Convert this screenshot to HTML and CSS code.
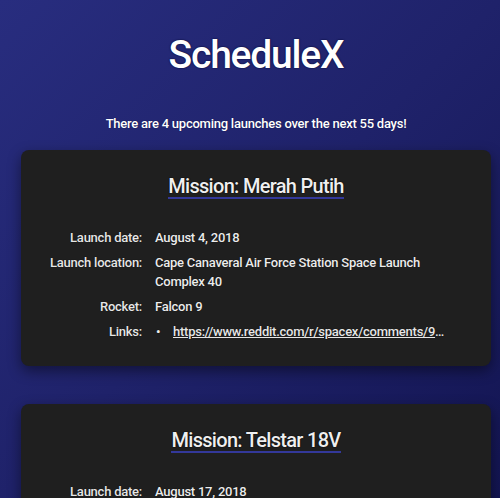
FILE: index.html
```html
<!DOCTYPE html>
<html lang="en">
<head>
<meta charset="utf-8">
<title>ScheduleX</title>
<link rel="stylesheet" href="styles.css">
</head>
<body>
<main class="page">
  <h1 class="brand">ScheduleX</h1>
  <p class="summary">There are 4 upcoming launches over the next 55 days!</p>

  <section class="card">
    <h2 class="mission"><span class="mission-name">Mission: Merah Putih</span></h2>
    <dl class="details">
      <dt>Launch date:</dt>
      <dd>August 4, 2018</dd>
      <dt>Launch location:</dt>
      <dd>Cape Canaveral Air Force Station Space Launch Complex 40</dd>
      <dt>Rocket:</dt>
      <dd>Falcon 9</dd>
      <dt>Links:</dt>
      <dd>
        <ul class="links">
          <li><a href="#">https://www.reddit.com/r/spacex/comments/9371jr/merah_putih_launch_campaign_thread/</a></li>
        </ul>
      </dd>
    </dl>
  </section>

  <section class="card">
    <h2 class="mission"><span class="mission-name">Mission: Telstar 18V</span></h2>
    <dl class="details">
      <dt>Launch date:</dt>
      <dd>August 17, 2018</dd>
      <dt>Launch location:</dt>
      <dd>Cape Canaveral Air Force Station Space Launch Complex 40</dd>
      <dt>Rocket:</dt>
      <dd>Falcon 9</dd>
      <dt>Links:</dt>
      <dd>
        <ul class="links">
          <li><a href="#">https://www.reddit.com/r/spacex/comments/95cte4/telstar_18v_launch_campaign_thread/</a></li>
        </ul>
      </dd>
    </dl>
  </section>
</main>
</body>
</html>
```

FILE: styles.css
```css
html {
  background: linear-gradient(135deg, #282d7f 0%, #1f226a 50%, #131552 100%) fixed;
  min-height: 100%;
}

body {
  margin: 0;
  font-family: Roboto, "Liberation Sans", Arial, sans-serif;
  font-weight: 500;
  letter-spacing: -0.015em;
  color: #e8e8e8;
}

.page {
  width: 470px;
  margin-left: 21px;
  padding-bottom: 40px;
}

.brand {
  margin: 31px 0 0;
  font-size: 39px;
  line-height: 48px;
  font-weight: 500;
  letter-spacing: -1.2px;
  text-align: center;
  color: #ffffff;
  text-shadow: 0 0 2px #0b0d3c, 0 0 1px #0b0d3c;
}

.summary {
  margin: 35px 0 0;
  font-size: 13px;
  line-height: 20px;
  text-align: center;
  color: #ffffff;
  text-shadow: 0 0 1px #0b0d3c;
}

.card {
  margin-top: 16px;
  padding: 25px 29px 25px;
  background: #1f1f1f;
  border-radius: 8px;
  box-shadow: 0 5px 14px rgba(0, 0, 0, 0.45);
}

.card + .card {
  margin-top: 38px;
}

.mission {
  margin: 0;
  font-size: 20px;
  line-height: 22px;
  font-weight: 500;
  letter-spacing: -0.7px;
  text-align: center;
  color: #efefef;
  text-shadow: 0 0 1px #000, 0 0 1px #000;
}

.mission-name {
  display: inline-block;
  border-bottom: 2px solid #33389a;
}

.details {
  display: grid;
  grid-template-columns: 92px 290px;
  column-gap: 13px;
  row-gap: 6px;
  margin: 29px 0 0;
  font-size: 13px;
  line-height: 19px;
  text-shadow: 0 0 1px #000;
}

.details dt {
  text-align: right;
  white-space: nowrap;
  color: #e6e6e6;
}

.details dd {
  margin: 0;
  min-width: 0;
  color: #ececec;
}

.links {
  margin: 0;
  padding: 0;
  list-style: none;
}

.links li {
  display: flex;
  min-width: 0;
}

.links li::before {
  content: "\2022";
  flex: 0 0 17px;
  padding-left: 1px;
}

.links a {
  display: block;
  min-width: 0;
  width: 273px;
  overflow: hidden;
  white-space: nowrap;
  text-overflow: ellipsis;
  color: #e6e6e6;
  text-decoration: underline;
}
```
